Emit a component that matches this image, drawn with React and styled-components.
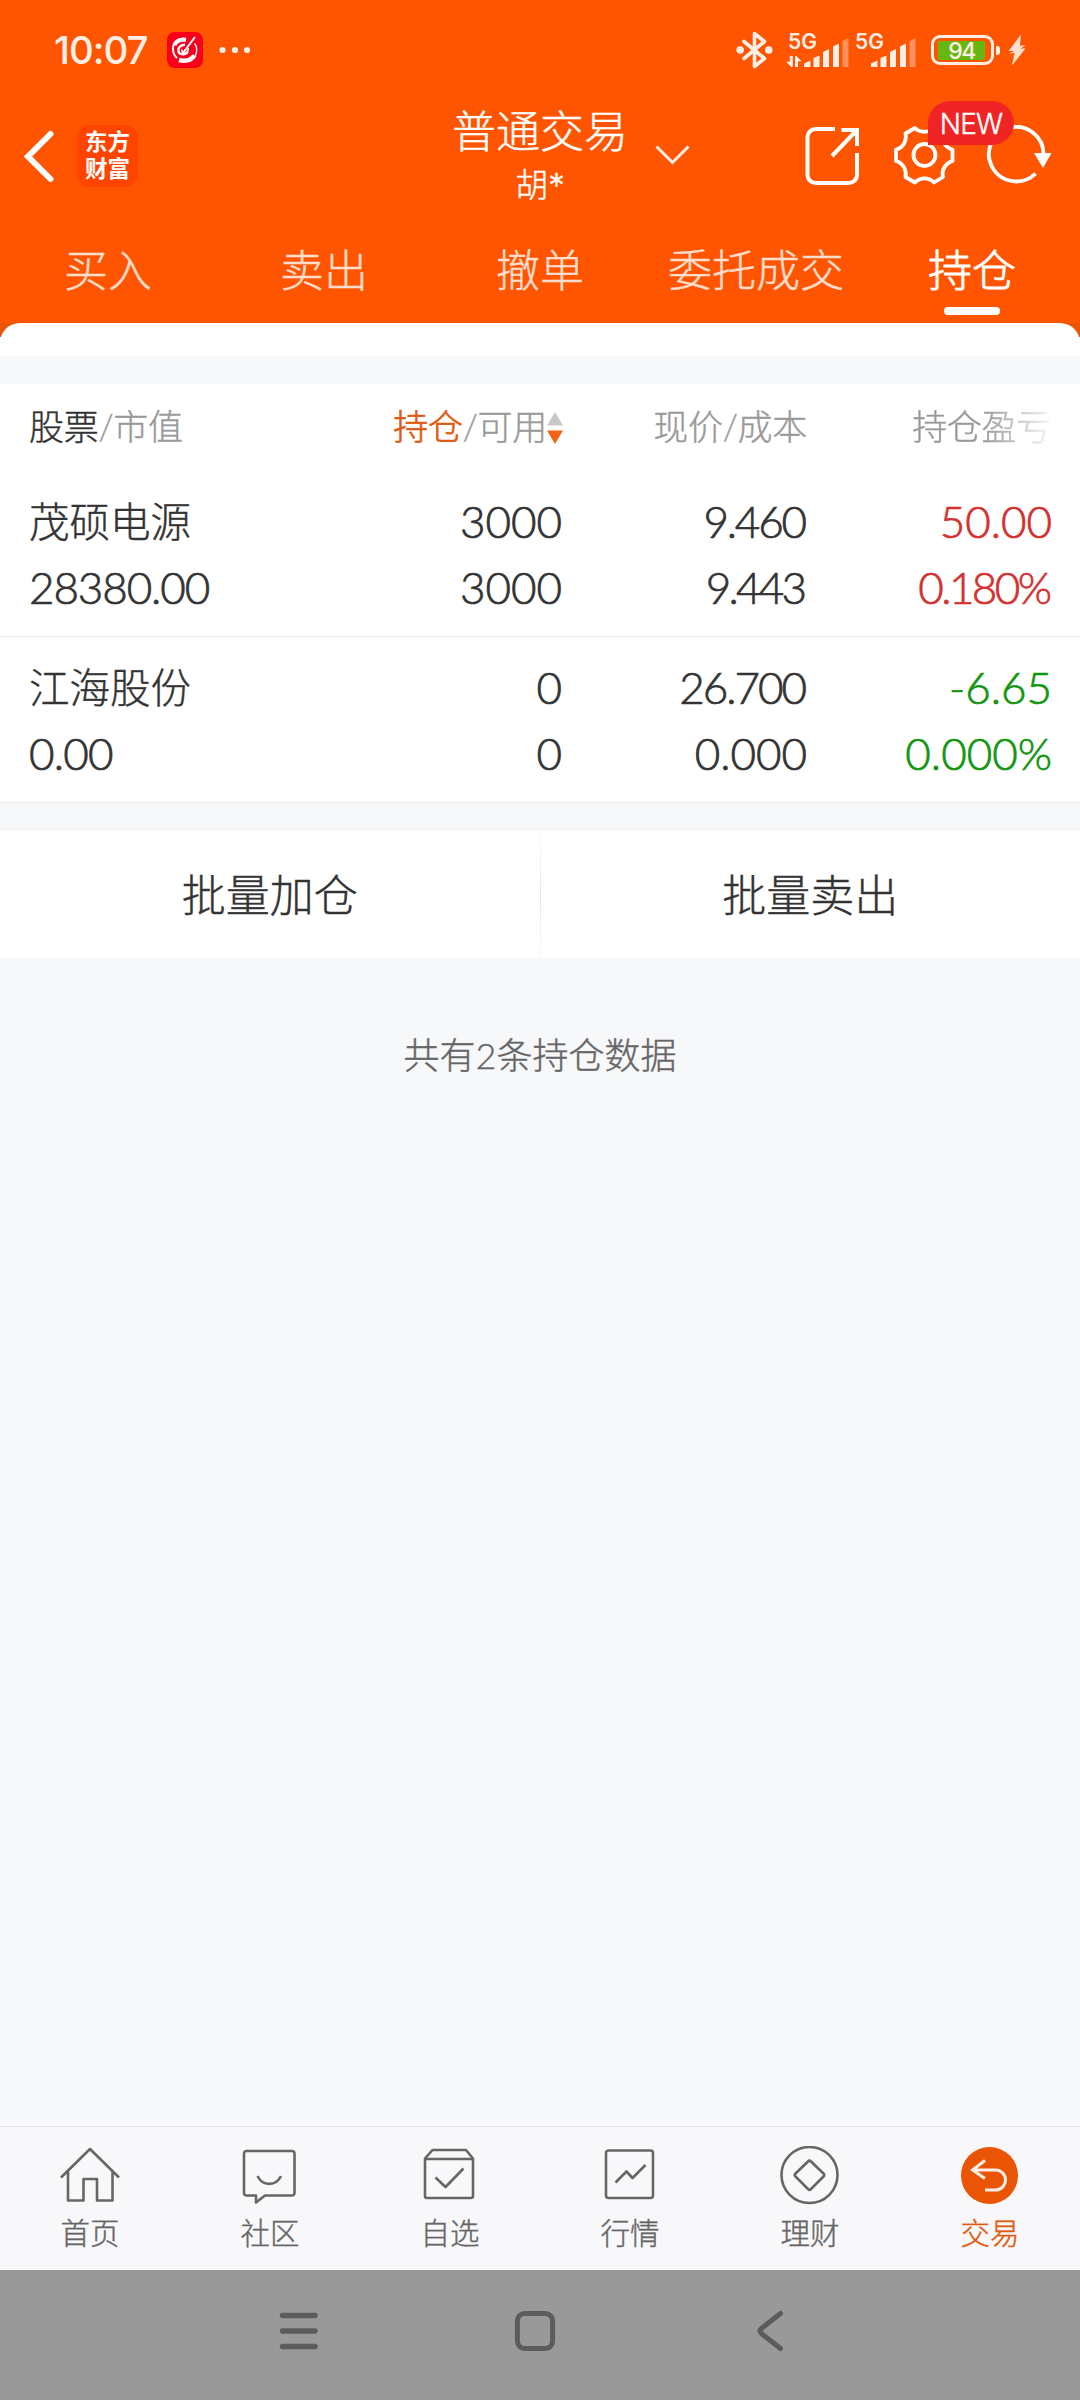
import styled, { createGlobalStyle } from "styled-components"

const tabs = ['买入', '卖出', '撤单', '委托成交', '持仓']

// each number is [text, letter spacing]
const stocks = [
    {
        name: '茂硕电源',
        color: '#d3302f',
        first: [['3000', 0], ['9.460', -2.2], ['50.00', 0]],
        value: ['28380.00', -1.1],
        second: [['3000', 0], ['9.443', -2.8], ['0.180%', -2.6]],
    },
    {
        name: '江海股份',
        color: '#11960f',
        first: [['0', 0], ['26.700', -2], ['-6.65', 0]],
        value: ['0.00', -0.8],
        second: [['0', 0], ['0.000', 0], ['0.000%', 0]],
    },
]

const menu = [
    { label: '首页', icon: <HomeIcon /> },
    { label: '社区', icon: <ChatIcon /> },
    { label: '自选', icon: <BoxIcon /> },
    { label: '行情', icon: <ChartIcon /> },
    { label: '理财', icon: <CoinIcon /> },
    { label: '交易', icon: <TradeIcon />, active: true },
]

export default function App() {
    return (
        <Page>
            <GlobalStyle />
            <StatusBar />
            <Header />

            <Tabs>
                {tabs.map(tab => (
                    <Tab key={tab} $active={tab === '持仓'}>{tab}</Tab>
                ))}
            </Tabs>

            <SheetBack>
                <Sheet />
            </SheetBack>
            <Gap />

            <TableHead>
                <HeadCell $left><Dark>股票</Dark>/市值</HeadCell>
                <HeadCell>
                    <Orange>持仓</Orange>/可用
                    <SortIcon />
                </HeadCell>
                <HeadCell>现价/成本</HeadCell>
                <HeadCell $fade>持仓盈亏</HeadCell>
            </TableHead>

            {stocks.map(stock => (
                <Stock key={stock.name} stock={stock} />
            ))}

            <Gap />
            <Actions>
                <Action>批量加仓</Action>
                <Action>批量卖出</Action>
            </Actions>

            <Content>
                <Summary>共有2条持仓数据</Summary>
            </Content>

            <BottomMenu>
                {menu.map(item => (
                    <MenuItem key={item.label} $active={item.active}>
                        {item.icon}
                        <span>{item.label}</span>
                    </MenuItem>
                ))}
            </BottomMenu>

            <SystemBar>
                <svg width="40" height="44" viewBox="0 0 40 44" stroke="#5c5c5c" strokeWidth="5.5" strokeLinecap="round">
                    <path d="M3.5 6.5H36M3.5 22H36M3.5 37.5H36" />
                </svg>
                <svg width="44" height="44" viewBox="0 0 44 44" fill="none" stroke="#5c5c5c" strokeWidth="5">
                    <rect x="4.4" y="4.4" width="35.2" height="35.2" rx="7.5" />
                </svg>
                <svg width="40" height="44" viewBox="0 0 40 44" fill="none" stroke="#5c5c5c" strokeWidth="5" strokeLinecap="round">
                    <path d="M29.5 4.5L10.7 19.2Q7.3 22 10.7 24.8L29.5 39.5" />
                </svg>
            </SystemBar>
        </Page>
    )
}

function Stock({ stock }) {
    const cells = (items) => items.map(([text, spacing], index) => (
        <Num key={index} $spacing={spacing} $color={index === 2 ? stock.color : '#333'}>{text}</Num>
    ))

    return (
        <StockRow>
            <Name>{stock.name}</Name>
            {cells(stock.first)}
            <Num $left $spacing={stock.value[1]}>{stock.value[0]}</Num>
            {cells(stock.second)}
        </StockRow>
    )
}

function StatusBar() {
    return (
        <Status>
            <Clock>10:07</Clock>
            <AppIcon>
                <svg width="36" height="36" viewBox="0 0 36 36" fill="none" stroke="#fff">
                    <path d="M18.5 6.8C11 5.5 5.5 11 6 17.5c.2 3.5 1.8 6.5 4 8.5" strokeWidth="2" />
                    <path d="M7.5 13c2-4 6-6 11.5-5" strokeWidth="4" />
                    <path d="M12.5 28.3c9 3 16-1.5 17-8.3.6-3.5-.3-6.5-2-8.5" strokeWidth="1.4" />
                    <path d="M12 28c6 1.500 12 .5 15.500-4.500" strokeWidth="4.6" />
                    <path d="M28 5L16 21" strokeWidth="2" />
                    <path d="M18 12.500c-5 .5-7.500 4-6.500 7 1 3.500 6.500 3.800 9.500.5" strokeWidth="2.4" />
                    <path d="M15 17.500c-.5 2 1 4.500 3.500 3.500 2-1 3-3 2.700-5" strokeWidth="1.6" />
                </svg>
            </AppIcon>
            <svg width="32" height="8" viewBox="0 0 32 8" fill="#ffeee5">
                <circle cx="3.5" cy="4" r="3.1" />
                <circle cx="16" cy="4" r="3.1" />
                <circle cx="28" cy="4" r="3.1" />
            </svg>
            <StatusRight>
                <svg width="38" height="40" viewBox="0 0 38 40" fill="none" stroke="#ffeee5" strokeWidth="3.6" strokeLinejoin="round" strokeLinecap="round">
                    <path d="M8 11.5L28.5 28.5L18.5 36.5V3.5L28.5 11.5L8 28.5" />
                    <circle cx="4.2" cy="20" r="2" fill="#ffeee5" />
                    <circle cx="32.8" cy="20" r="2" fill="#ffeee5" />
                </svg>
                <Signal $gap="12px">
                    <Network>5G</Network>
                    <SignalBars arrows />
                </Signal>
                <Signal $gap="3px">
                    <Network>5G</Network>
                    <SignalBars />
                </Signal>
                <Battery>
                    <Charge>94</Charge>
                </Battery>
                <Nub />
                <svg width="20" height="32" viewBox="0 0 20 32" fill="#ffddcc">
                    <path d="M14 0.500L1.500 17H7L2 19.500 7.500 19 5 31.500 18.500 14.500h-5L18.500 11.500h-5.500z" />
                </svg>
            </StatusRight>
        </Status>
    )
}

function SignalBars({ arrows }) {
    return (
        <svg width="64" height="30" viewBox="0 0 64 30" fill="#ffeee5">
            {arrows && <path d="M3.8 19h3v11h-1.500L0 24.800h3.800zM9 19h1.500l5 5.200H12V30H9z" />}
            <path d="M18 30v-3.500l6.500-3V30z" />
            <path d="M27.500 30V21l6-2.500V30z" />
            <path d="M37 30V15l6-3V30z" />
            <path d="M47 30V9.500l6-3V30z" />
            <path d="M56.500 30V4l6-3V30z" opacity="0.4" />
        </svg>
    )
}

function Header() {
    return (
        <HeaderBar>
            <HeaderSide>
                <svg width="32" height="54" viewBox="0 0 32 54" fill="none" stroke="#fff" strokeWidth="6" strokeLinecap="round">
                    <path d="M27.500 5L5 27.500L27.500 50" />
                </svg>
                <Logo>东方<br />财富</Logo>
            </HeaderSide>

            <TitleBox>
                <Title>普通交易</Title>
                <UserName>胡<Star>*</Star></UserName>
            </TitleBox>
            <Arrow width="36" height="22" viewBox="0 0 36 22" fill="none" stroke="#ffeee5" strokeWidth="3">
                <path d="M2.500 2.500L18.500 18.500L34.500 2.500" />
            </Arrow>

            <Tools>
                <svg width="60" height="60" viewBox="0 0 60 60" fill="none" stroke="#fff" strokeWidth="4">
                    <path d="M32 4H12.500a8 8 0 0 0-8 8v38a8 8 0 0 0 8 8H46a8 8 0 0 0 8-8V28M38.500 5H54V21M53.500 5.500L29 31" />
                </svg>
                <svg width="66" height="60" viewBox="0 0 66 60" fill="none" stroke="#fff" strokeWidth="3.8" strokeLinejoin="round">
                    <path d="M24 3C29 8 38 8 43 3L52 8.500C50 16 55 23 61.500 24.500V36C55 38 50 45 52 52L43 57.500C38 52 29 52 24 57.500L14.500 52C16 45 12 38 5 36V24.500C12 23 16 16 14.500 8.500Z" />
                    <circle cx="33.500" cy="30" r="11" />
                </svg>
                <svg width="66" height="60" viewBox="0 0 66 60" fill="none" stroke="#fff" strokeWidth="3.8">
                    <path d="M50.500 48.500A27.300 27.300 0 1 1 58.500 30" />
                    <path d="M49 28h17.500l-8.500 15z" fill="#fff" stroke="none" />
                </svg>
                <Badge>NEW</Badge>
            </Tools>
        </HeaderBar>
    )
}

function SortIcon() {
    return (
        <svg width="16" height="32" viewBox="0 0 16 32">
            <path d="M8 0l8 13.500H0z" fill="#c8c8c8" />
            <path d="M0 18.500h16L8 32z" fill="#f56414" />
        </svg>
    )
}

function HomeIcon() {
    return (
        <Icon>
            <path d="M2 31.500L31 3L60 31.500M9 25V54.500H24.500V33H38V54.500H53.500V25" />
        </Icon>
    )
}

function ChatIcon() {
    return (
        <Icon>
            <path d="M7.500 5H53a2.500 2.500 0 0 1 2.500 2.500V47a2.500 2.500 0 0 1-2.500 2.500H26L17 56.500V49.500H7.500A2.500 2.500 0 0 1 5 47V7.500A2.500 2.500 0 0 1 7.500 5Z" />
            <path d="M18.500 30C23.500 40.500 37 40.500 42 30" />
        </Icon>
    )
}

function BoxIcon() {
    return (
        <Icon>
            <path d="M13.500 4H47L54 12.500V50a2 2 0 0 1-2 2H8a2 2 0 0 1-2-2V12.500ZM6 13H54M16.500 31.500L26.500 41L44.500 22.500" />
        </Icon>
    )
}

function ChartIcon() {
    return (
        <Icon>
            <rect x="7" y="4.500" width="47" height="47.500" rx="2.500" />
            <path d="M16.500 36.500L27.500 25.500L33.500 32L46.500 19" />
        </Icon>
    )
}

function CoinIcon() {
    return (
        <Icon>
            <circle cx="30.500" cy="29" r="28" />
            <path d="M29 15.500Q30.500 14 32 15.500L44.500 27.500Q46 29 44.500 30.500L32 43Q30.500 44.500 29 43L16.500 30.500Q15 29 16.500 27.500Z" />
        </Icon>
    )
}

function TradeIcon() {
    return (
        <svg width="62" height="60" viewBox="0 0 62 60" fill="none" stroke="#ffeee5" strokeWidth="3">
            <circle cx="30.500" cy="29.500" r="28.500" fill="#e95504" stroke="none" />
            <path d="M26 14.500L13.500 24L26 32.500M14.500 24H36.500a9.900 9.900 0 0 1 0 20H26" />
        </svg>
    )
}

const GlobalStyle = createGlobalStyle`
    * {
        box-sizing: border-box;
    }

    body {
        margin: 0;
        font-family: Lato, 'Noto Sans CJK SC', sans-serif;
        font-weight: 300;
        -webkit-text-stroke: 0.4px;
    }

    svg {
        display: block;
        flex-shrink: 0;
    }
`

const Page = styled.div`
    display: flex;
    flex-direction: column;
    width: 1080px;
    height: 2400px;
    overflow: hidden;
    background-color: #f7f8fa;
    color: #333;
`

const Status = styled.div`
    display: flex;
    align-items: center;
    height: 100px;
    padding: 0 53px 0 54px;
    background-color: #ff5500;
    color: #ffeee5;
    font-family: Inter, sans-serif;
    -webkit-text-stroke: 0;
`

const Clock = styled.div`
    width: 113px;
    font-size: 38.5px;
    font-weight: 500;
    letter-spacing: -1px;
`

const AppIcon = styled.div`
    width: 36px;
    height: 36px;
    margin-right: 16px;
    border-radius: 8px;
    background-color: #f8001c;
`

const StatusRight = styled.div`
    display: flex;
    align-items: center;
    margin-left: auto;
`

const Signal = styled.div`
    position: relative;
    width: 64px;
    height: 32px;
    padding-top: 3px;
    margin-left: ${(props) => props.$gap};
`

const Network = styled.div`
    position: absolute;
    left: 2px;
    top: -3px;
    font-size: 21px;
    line-height: 22px;
    font-weight: 600;
`

const Battery = styled.div`
    width: 63px;
    height: 30px;
    margin-left: 14px;
    padding: 3px 4px;
    border: 3px solid #ffeee5;
    border-radius: 9px;
`

const Charge = styled.div`
    width: 47px;
    height: 19px;
    border-radius: 2px;
    background-color: #66b811;
    text-align: center;
    font-size: 23px;
    line-height: 20px;
    font-weight: 500;
    letter-spacing: -1.5px;
`

const Nub = styled.div`
    width: 4px;
    height: 9px;
    margin: 0 7px 0 2px;
    border-radius: 0 3px 3px 0;
    background-color: #ffeee5;
`

const HeaderBar = styled.div`
    position: relative;
    display: flex;
    justify-content: center;
    height: 117px;
    background-color: #ff5500;
    color: #fff;
`

const HeaderSide = styled.div`
    position: absolute;
    left: 23px;
    top: 25px;
    display: flex;
    align-items: center;
    gap: 22px;
`

const Logo = styled.div`
    width: 61px;
    height: 62px;
    padding-top: 3px;
    border-radius: 13px;
    background-color: #ff4400;
    font-size: 22.5px;
    line-height: 27px;
    font-weight: 700;
    text-align: center;
    -webkit-text-stroke: 0;
`

const TitleBox = styled.div`
    text-align: center;
`

const Title = styled.div`
    height: 60px;
    font-size: 44px;
    line-height: 62px;
`

const UserName = styled.div`
    height: 48px;
    font-size: 33px;
    line-height: 48px;
`

const Star = styled.span`
    font-family: Inter, sans-serif;
    font-weight: 300;
`

const Arrow = styled.svg`
    position: absolute;
    left: 654px;
    top: 44px;
`

const Tools = styled.div`
    position: absolute;
    left: 803px;
    top: 25px;
    display: flex;
    gap: 28px;
`

const Badge = styled.div`
    position: absolute;
    left: 125px;
    top: -24px;
    width: 86px;
    height: 44px;
    border-radius: 22px 22px 22px 0;
    background-color: #f02424;
    font-family: Inter, sans-serif;
    font-size: 28px;
    line-height: 46px;
    letter-spacing: -0.8px;
    text-align: center;
`

const Tabs = styled.div`
    display: grid;
    grid-template-columns: repeat(5, 1fr);
    height: 106px;
    background-color: #ff5500;
`

const Tab = styled.div`
    display: flex;
    flex-direction: column;
    align-items: center;
    padding-top: 23px;
    font-size: 44px;
    line-height: 60px;
    color: ${(props) => props.$active ? '#fff' : '#ffddcc'};
    -webkit-text-stroke: ${(props) => props.$active ? '0.8px' : '0.4px'};

    &::after {
        content: '';
        width: 56px;
        height: 8px;
        margin-top: 7px;
        border-radius: 4px;
        background-color: ${(props) => props.$active ? '#fff' : 'transparent'};
    }
`

const SheetBack = styled.div`
    height: 33px;
    background: linear-gradient(#e95504 14px, #fff 14px);
`

const Sheet = styled.div`
    height: 33px;
    border-radius: 20px 20px 0 0;
    background-color: #fff;
`

const Gap = styled.div`
    height: 28px;
`

const TableHead = styled.div`
    display: grid;
    grid-template-columns: 234px 300px 244px 244px;
    align-items: center;
    height: 87px;
    padding-left: 29px;
    background-color: #fff;
    font-size: 35px;
    line-height: 50px;
    letter-spacing: -0.3px;
    color: #999;
`

const HeadCell = styled.div`
    display: flex;
    align-items: center;
    justify-content: ${(props) => props.$left ? 'flex-start' : 'flex-end'};
    height: 50px;
    padding-bottom: 3px;
    mask-image: ${(props) => props.$fade ? 'linear-gradient(to right, #000 72%, rgba(0, 0, 0, 0.1))' : 'none'};

    svg {
        position: relative;
        top: 2px;
    }
`

const Dark = styled.span`
    color: #333;
`

const Orange = styled.span`
    color: #e05a10;
    -webkit-text-stroke: 0.6px;
`

const StockRow = styled.div`
    display: grid;
    grid-template-columns: 233px 300px 245px 245px;
    grid-template-rows: 66px 66px;
    align-items: center;
    height: 166px;
    padding: 17px 0 0 29px;
    background-color: #fff;
    border-bottom: 1px solid #ebebeb;
`

const Name = styled.div`
    padding-top: 2px;
    font-size: 40.5px;
    line-height: 60px;
`

const Num = styled.div`
    margin-right: ${(props) => -props.$spacing}px;
    font-family: Lato, sans-serif;
    font-size: 44px;
    line-height: 60px;
    letter-spacing: ${(props) => props.$spacing}px;
    text-align: ${(props) => props.$left ? 'left' : 'right'};
    color: ${(props) => props.$color};
    -webkit-text-stroke: 0.7px;
`

const Actions = styled.div`
    display: flex;
    height: 127px;
    background-color: #fff;
`

const Action = styled.div`
    flex: 1;
    font-size: 44px;
    line-height: 128px;
    text-align: center;

    &:first-child {
        border-right: 1px solid;
        border-image: linear-gradient(#fafafa, #e8e8e8 50%, #fafafa) 1;
    }
`

const Content = styled.div`
    flex: 1;
    padding-top: 67px;
`

const Summary = styled.div`
    font-size: 36px;
    line-height: 60px;
    text-align: center;
    color: #666;
`

const BottomMenu = styled.div`
    display: grid;
    grid-template-columns: repeat(6, 1fr);
    height: 144px;
    border-top: 1px solid #e2e2e4;
    background-color: #f8f8fa;
`

const MenuItem = styled.div`
    display: flex;
    flex-direction: column;
    align-items: center;
    padding-top: 19px;
    font-size: 29.5px;
    line-height: 54px;
    color: ${(props) => props.$active ? '#e05a10' : '#666'};
`

const Icon = styled.svg.attrs({ viewBox: '0 0 62 60' })`
    width: 62px;
    height: 60px;
    fill: none;
    stroke: #666;
    stroke-width: 2.6;
    stroke-linejoin: round;
`

const SystemBar = styled.div`
    display: flex;
    align-items: center;
    gap: 194px;
    height: 130px;
    padding: 0 0 8px 279px;
    background-color: #999;
`
